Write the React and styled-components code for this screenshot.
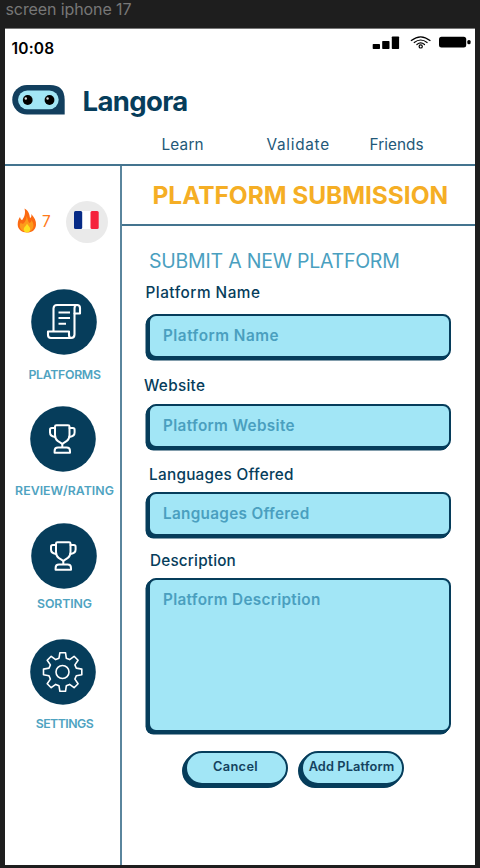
import React from "react";
import styled, { createGlobalStyle } from "styled-components";

const navy = "#063d5b";
const teal = "#4a9fbf";
const aqua = "#a2e6f6";
const rule = "#44748f";

const GlobalStyle = createGlobalStyle`
  * { box-sizing: border-box; }
  body { margin: 0; background: #1e1e1e; font-family: Inter, Poppins, "Liberation Sans", sans-serif; }
`;

const Canvas = styled.div`
  width: 480px;
  height: 868px;
  padding-left: 5px;
  background: #1e1e1e;
`;

const FrameName = styled.div`
  height: 28px;
  padding-left: 0.5px;
  line-height: 18px;
  font-size: 16px;
  letter-spacing: -0.1px;
  color: #777;
`;

const Phone = styled.div`
  display: flex;
  flex-direction: column;
  width: 470.4px;
  height: 837px;
  background: #fff;
  border-top: 1px solid #777;
`;

const Header = styled.header`
  height: 137px;
  flex: none;
  border-bottom: 2px solid ${rule};
`;

const StatusBar = styled.div`
  display: flex;
  justify-content: space-between;
  height: 38px;
  padding: 0 4.5px 0 6.5px;
`;

const Clock = styled.div`
  line-height: 39px;
  font-size: 15.5px;
  font-weight: 600;
  letter-spacing: 0.2px;
  color: #000;
`;

const StatusIcons = styled.svg`
  width: 99px;
  height: 16px;
  margin-top: 6px;
`;

const Brand = styled.div`
  display: flex;
  align-items: center;
  height: 34px;
  margin-top: 17px;
  padding-left: 7px;
`;

const BrandMark = styled.svg`
  width: 53px;
  height: 30px;
  margin-top: -2px;
`;

const BrandName = styled.div`
  margin-left: 17.5px;
  line-height: 34px;
  font-size: 27.5px;
  font-weight: 700;
  letter-spacing: -0.65px;
  color: ${navy};
`;

const Nav = styled.nav`
  display: flex;
  height: 24px;
  margin-top: 14px;
  padding-left: 156.5px;
`;

const NavLink = styled.a`
  width: ${(p) => p.$width}px;
  line-height: 25px;
  font-size: 15.3px;
  letter-spacing: ${(p) => p.$track}px;
  color: #235878;
`;

const Body = styled.div`
  display: flex;
  flex: 1;
`;

const Sidebar = styled.aside`
  display: flex;
  flex-direction: column;
  width: 117px;
  border-right: 2px solid #5a859d;
`;

const Stats = styled.div`
  display: flex;
  align-items: center;
  height: 42px;
  margin: 35px 0 46px;
  padding-left: 12px;
`;

const Flame = styled.svg`
  width: 20px;
  height: 26px;
  margin-top: -3px;
`;

const Streak = styled.div`
  width: 24px;
  padding-left: 5px;
  font-size: 15.5px;
  line-height: 42px;
  color: #ff7a1a;
`;

const FlagBadge = styled.div`
  display: flex;
  align-items: center;
  justify-content: center;
  width: 42px;
  height: 42px;
  margin-left: 5px;
  border-radius: 50%;
  background: #eaeaea;
  padding: 0 1px 4px 0;
`;

const Flag = styled.svg`
  width: 25px;
  height: 18px;
`;

const MenuItem = styled.a`
  display: flex;
  flex-direction: column;
  align-items: center;
  height: ${(p) => p.$height}px;
`;

const MenuIcon = styled.svg`
  flex: none;
  width: 66px;
  height: 66px;
  margin-left: ${(p) => p.$shift}px;
`;

const MenuLabel = styled.span`
  margin-top: ${(p) => p.$top}px;
  margin-left: 4px;
  white-space: nowrap;
  line-height: 16px;
  font-size: 12.3px;
  font-weight: 600;
  letter-spacing: ${(p) => p.$track}px;
  color: #4fa3c1;
`;

const Main = styled.main`
  width: 353.4px;
`;

const PageTitle = styled.h1`
  height: 60px;
  margin: 0;
  padding-left: 30.5px;
  border-bottom: 2px solid ${rule};
  white-space: nowrap;
  line-height: 59px;
  font-size: 24.5px;
  font-weight: 700;
  letter-spacing: -0.05px;
  color: #f5ae25;
`;

const Form = styled.form`
  display: flex;
  flex-direction: column;
`;

const FormTitle = styled.h2`
  height: 24px;
  margin: 23px 0 0;
  padding-left: 27px;
  white-space: nowrap;
  line-height: 24px;
  font-size: 19.5px;
  font-weight: 400;
  letter-spacing: -0.22px;
  color: ${teal};
`;

const Label = styled.label`
  height: 20px;
  margin-top: ${(p) => p.$top}px;
  padding-left: ${(p) => p.$left}px;
  line-height: 21px;
  font-size: 15.3px;
  font-weight: 500;
  letter-spacing: ${(p) => p.$track}px;
  color: ${navy};
`;

const Field = styled.div`
  width: 303px;
  height: ${(p) => p.$height || 44}px;
  margin: ${(p) => p.$top}px 0 0 26px;
  padding-left: 13px;
  border: 2px solid ${navy};
  border-radius: 8px;
  background: ${aqua};
  box-shadow: -1px 1px 0 ${navy}, -2px 2px 0 ${navy}, -2.5px 2.5px 0 ${navy};
  line-height: 40px;
  font-size: 15.3px;
  font-weight: 600;
  letter-spacing: ${(p) => p.$track}px;
  color: ${teal};
`;

const Actions = styled.div`
  display: flex;
  gap: 13px;
  margin: 19px 0 0 62.5px;
`;

const Button = styled.button`
  width: 103px;
  height: 33.5px;
  padding: 0 1px 2px 0;
  border: 2px solid ${navy};
  border-radius: 17px;
  background: ${aqua};
  box-shadow: -1px 1px 0 ${navy}, -2px 2px 0 ${navy}, -3px 3px 0 ${navy};
  white-space: nowrap;
  font: 600 12.8px Inter, Poppins, sans-serif;
  letter-spacing: ${(p) => p.$track}px;
  color: #14425e;
`;

const Disc = () => <circle cx="33" cy="33" r="32.8" fill={navy} />;

const ScrollIcon = () => (
  <MenuIcon $shift={3} viewBox="0 0 66 66">
    <Disc />
    <g fill="none" stroke="#fff" strokeWidth="2.1" strokeLinejoin="round" strokeLinecap="round">
      <path d="M22.500 42.500V19.500Q22.500 16 26 16H46Q49 16 49 19V24.500H43.500V45.500Q43.500 49 40 49H20Q17 49 17 46V42.500H38V46Q38 49 40.500 49" />
      <path d="M43.500 24.500V19.500Q43.500 16 46 16" />
      <path d="M27.500 23.500H39M27.500 29H39M27.500 34.800H35" strokeLinecap="butt" />
    </g>
  </MenuIcon>
);

const TrophyIcon = ({ shift }) => (
  <MenuIcon $shift={shift} viewBox="0 0 66 66">
    <Disc />
    <g fill="none" stroke="#fff" strokeWidth="2" strokeLinejoin="round" strokeLinecap="round">
      <path d="M25 20.500Q25 19.200 26.500 19.200H38Q39.500 19.200 39.500 20.500V29Q39.500 33 36.500 35.200L32.300 37.800L28 35.200Q25 33 25 29Z" />
      <path d="M25 22H21.800Q20 22 20 23.800V26.500Q20 30.300 25 31M39.500 22H42.800Q44.600 22 44.600 23.800V26.500Q44.600 30.300 39.500 31" />
      <path d="M32.300 38V41.500M24.600 46.800V45Q24.600 41.600 28 41.600H36.600Q40 41.600 40 45V46.800Z" />
    </g>
  </MenuIcon>
);

const GearIcon = () => (
  <MenuIcon $shift={1.5} viewBox="0 0 66 66">
    <Disc />
    <g fill="none" stroke="#fff" strokeWidth="1.6" strokeLinejoin="round">
      <circle cx="32.500" cy="33" r="6.500" />
      <path d="M29.900 13.700H35.500L36.300 19.200L39.600 20.600L44.100 17.300L48.100 21.300L44.900 25.900L46.300 29.100L51.800 30.100V35.800L46.300 36.800L44.900 40.100L48.100 44.700L44.100 48.700L39.600 45.400L36.300 46.800L35.500 52.300H29.900L29 46.800L25.700 45.400L21.200 48.700L17.200 44.700L20.400 40.100L19 36.800L13.500 35.800V30.100L19 29.100L20.400 25.900L17.200 21.300L21.200 17.300L25.700 20.600L29 19.200Z" />
    </g>
  </MenuIcon>
);

export default function App() {
  return (
    <Canvas>
      <GlobalStyle />
      <FrameName>screen iphone 17</FrameName>
      <Phone>
        <Header>
          <StatusBar>
            <Clock>10:08</Clock>
            <StatusIcons viewBox="0 0 99 16">
              <rect x="0.700" y="9" width="7.300" height="5" rx="0.700" />
              <rect x="10.200" y="6" width="7.300" height="8" rx="0.700" />
              <rect x="19.800" y="1.500" width="7.300" height="12.500" rx="0.700" />
              <g fill="none" stroke="#000" strokeWidth="1.200" strokeLinecap="round">
                <path d="M39.300 5.500Q48.700 -1.900 58 5.500" />
                <path d="M42.200 7.500Q48.700 2.500 55.100 7.500" />
                <path d="M44.900 9.500Q48.700 6.400 52.500 9.500" />
                <circle cx="48.700" cy="11.400" r="1.600" />
              </g>
              <rect x="67" y="1.700" width="27.200" height="10.700" rx="2.500" />
              <rect x="95.300" y="5" width="3.300" height="4.300" rx="1.500" />
            </StatusIcons>
          </StatusBar>
          <Brand>
            <BrandMark viewBox="0 0 53 30">
              <path d="M15 0H38Q52.700 0 52.700 15V29.500H15A14.750 14.750 0 0 1 15 0Z" fill="#123f5e" />
              <rect x="6" y="5.500" width="40.700" height="18.700" rx="9.350" fill={aqua} />
              <circle cx="15.700" cy="15" r="4.900" />
              <circle cx="37.500" cy="15" r="4.900" />
              <circle cx="13.800" cy="13.500" r="1.200" fill="#ddd" />
              <circle cx="35.600" cy="13.500" r="1.200" fill="#ddd" />
            </BrandMark>
            <BrandName>Langora</BrandName>
          </Brand>
          <Nav>
            <NavLink $width={105} $track={0.2}>Learn</NavLink>
            <NavLink $width={103} $track={0.72}>Validate</NavLink>
            <NavLink $width={60} $track={0.06}>Friends</NavLink>
          </Nav>
        </Header>
        <Body>
          <Sidebar>
            <Stats>
              <Flame viewBox="0 0 20 26">
                <path d="M7.500 0.500C12 3 12.500 7 13 10C14.500 9.500 14.500 7.500 14.300 6C17.500 9.500 19.300 13 19 17C18.600 22 15 24.500 10 24.500C4.500 24.500 0.700 21 0.700 16.500C0.700 13 2 10.500 3 9C3.500 11 4 12 5.200 12C7.500 9 8.800 5 7.500 0.500Z" fill="#fb6a13" />
                <path d="M9.500 8C11 11 11 14 12.500 15C14 14.500 14.500 13 14.500 12C16.500 15 17.300 18.500 15.500 21C13 25 6 25 3.500 20.500C2 17.500 3 15.500 4 14.500C4.500 16 5.500 16 6.500 15.500C8.500 14 9.500 11 9.500 8Z" fill="#fd9a1c" />
                <path d="M10 15.500C11 18 13 18.500 13.300 21C13.300 23.500 11.500 24.500 9.800 24.500C8 24.500 6.500 23.300 6.700 21C7 18.500 9.500 18 10 15.500Z" fill="#fde01f" />
              </Flame>
              <Streak>7</Streak>
              <FlagBadge>
                <Flag viewBox="0 0 25 18">
                  <rect x="8" width="9" height="18" fill="#fff" />
                  <rect width="8.200" height="18" rx="1.500" fill="#062a86" />
                  <rect x="16.500" width="8.200" height="18" rx="1.500" fill="#f5233c" />
                </Flag>
              </FlagBadge>
            </Stats>
            <MenuItem $height={116.5}>
              <ScrollIcon />
              <MenuLabel $top={11.5} $track={-0.3}>PLATFORMS</MenuLabel>
            </MenuItem>
            <MenuItem $height={117}>
              <TrophyIcon shift={1.5} />
              <MenuLabel $top={11} $track={0.05}>REVIEW/RATING</MenuLabel>
            </MenuItem>
            <MenuItem $height={116.5}>
              <TrophyIcon shift={3} />
              <MenuLabel $top={7} $track={-0.1}>SORTING</MenuLabel>
            </MenuItem>
            <MenuItem $height={110}>
              <GearIcon />
              <MenuLabel $top={10.5} $track={-0.5}>SETTINGS</MenuLabel>
            </MenuItem>
          </Sidebar>
          <Main>
            <PageTitle>PLATFORM SUBMISSION</PageTitle>
            <Form>
              <FormTitle>SUBMIT A NEW PLATFORM</FormTitle>
              <Label $top={9} $left={23.5} $track={0.5}>Platform Name</Label>
              <Field $top={12} $track={0.5}>Platform Name</Field>
              <Label $top={17} $left={22} $track={0.3}>Website</Label>
              <Field $top={8.5} $track={0.34}>Platform Website</Field>
              <Label $top={16.5} $left={27} $track={0.28}>Languages Offered</Label>
              <Field $top={8} $track={0.3}>Languages Offered</Field>
              <Label $top={13.5} $left={28} $track={0.18}>Description</Label>
              <Field $top={8.5} $height={154} $track={0.3}>Platform Description</Field>
              <Actions>
                <Button type="button" $track={0.35}>Cancel</Button>
                <Button type="button" $track={0.1}>Add PLatform</Button>
              </Actions>
            </Form>
          </Main>
        </Body>
      </Phone>
    </Canvas>
  );
}
